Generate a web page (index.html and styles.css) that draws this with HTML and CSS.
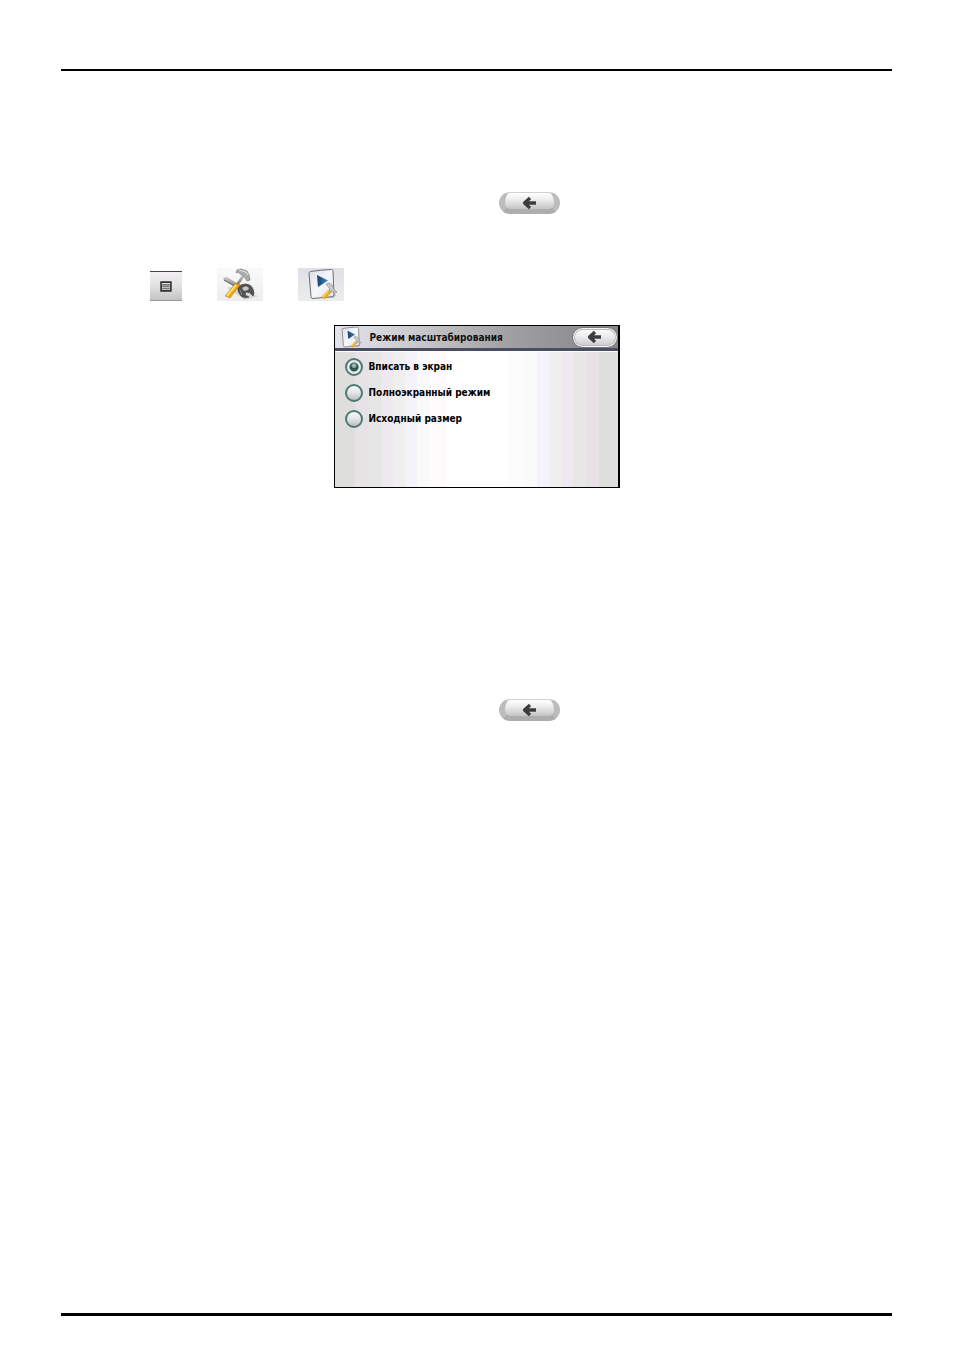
FILE: index.html
```
<!DOCTYPE html>
<html lang="ru">
<head>
	<meta charset="UTF-8" />
	<title>Режим масштабирования</title>
	<link rel="stylesheet" href="styles.css">
</head>
<body>
	<!-- shared drawings -->
	<svg class="defs" aria-hidden="true">
		<defs>
			<linearGradient id="paper" x1="0" y1="0" x2="1" y2="1">
				<stop offset="0" stop-color="#d9dde5" />
				<stop offset="0.5" stop-color="#f6f7fa" />
				<stop offset="1" stop-color="#e2e4ea" />
			</linearGradient>
			<linearGradient id="play" x1="0" y1="0" x2="1" y2="0">
				<stop offset="0" stop-color="#173f68" />
				<stop offset="1" stop-color="#3f86bd" />
			</linearGradient>
			<linearGradient id="steel" x1="0" y1="0" x2="0" y2="1">
				<stop offset="0" stop-color="#c9cbcb" />
				<stop offset="1" stop-color="#686b6c" />
			</linearGradient>
		</defs>
		<symbol id="arrow" viewBox="0 0 14 14">
			<path d="M7.500 2 2 7l5.500 5M2.500 7h11" fill="none" stroke="#3c3c3e" stroke-width="3.300" stroke-linejoin="round" />
		</symbol>
		<symbol id="sheet" viewBox="0 0 32 32">
			<path d="M4 30h24l2-3-3-2z" fill="#999" opacity="0.5" />
			<path d="M4.500 3.500Q14 2 25.500 1.500q1.500 0 1.500 2l1 23q0 2-2 2.200L7 30.500q-2 0-2-2L3 5.500q0-2 1.500-2z" fill="url(#paper)" stroke="#6b6e75" />
			<path d="m11 7 11 5.500L12 19z" fill="url(#play)" />
			<path d="m17 30 8-8" stroke="#e3a92e" stroke-width="4" />
			<path d="m16.500 29 8-8" stroke="#ffd65a" stroke-width="1.500" />
			<path d="m20 16 3-1 3 2 2 5 3 2-1 1-4-2-3 1 1-3z" fill="#c9cccb" stroke="#8b8f8d" stroke-width="0.700" />
		</symbol>
	</svg>

	<main class="page">
		<p class="line">
			<button type="button" class="back" aria-label="Назад"><svg><use href="#arrow" /></svg></button>
		</p>

		<div class="path">
			<button type="button" class="menu" aria-label="Меню">
				<svg viewBox="0 0 11 10"><path d="M1 1h9v8H1z" fill="#e4e4e4" stroke="#303030" stroke-width="1.500" /><path d="M2 3.500h7M2 5.200h7M2 7h7" stroke="#555" /></svg>
			</button>
			<button type="button" class="tile" aria-label="Настройки">
				<svg viewBox="0 0 46 33">
					<path d="M10 20q9-4 18 5l14 3-14 4z" fill="#c4c4c4" opacity="0.6" />
					<!-- wrench -->
					<path d="m6 10 4-1 16 10-2 4L7 12z" fill="url(#steel)" />
					<path d="m7 12 16 9" stroke="#5b5e5f" />
					<path d="M21 19q3-3 7-3 6 0 8 5 2 5 0 7l-3-3-4-1-1 3 4 2q-5 2-8-1-4-4-3-10z" fill="#505354" stroke="#3d4040" stroke-width="0.600" />
					<path d="m25 20 4-2 3 2-1 2-4 1z" fill="#c4c7c7" />
					<path d="m23 22 2 5" stroke="#8c8f90" />
					<!-- hammer -->
					<path d="m25 7 3 1-7 10-2-2z" fill="url(#steel)" />
					<path d="m20 2 4-1 6 2 2 4 1 5-3 1-3-5-4-2-2-2-2 1z" fill="#aaadae" stroke="#7c7f80" stroke-width="0.700" />
					<path d="m22 2 7 2 2 3" fill="none" stroke="#e8eaea" />
					<path d="m19 15 4 2-10 13-5-2z" fill="#f0a01e" stroke="#c77c19" stroke-width="0.600" />
					<path d="M19 17 10 28" stroke="#ffe056" stroke-width="2" />
				</svg>
			</button>
			<button type="button" class="tile" aria-label="Режим масштабирования"><svg viewBox="-8 0 46 33"><use href="#sheet" width="32" height="32" /></svg></button>
		</div>

		<section class="screen">
			<header class="bar">
				<svg class="logo"><use href="#sheet" /></svg>
				<h1>Режим масштабирования</h1>
				<button type="button" class="back small" aria-label="Назад"><svg><use href="#arrow" /></svg></button>
			</header>
			<form class="modes">
				<label><input type="radio" name="mode" checked />Вписать в экран</label>
				<label><input type="radio" name="mode" />Полноэкранный режим</label>
				<label><input type="radio" name="mode" />Исходный размер</label>
			</form>
		</section>

		<p class="line">
			<button type="button" class="back" aria-label="Назад"><svg><use href="#arrow" /></svg></button>
		</p>
	</main>
</body>
</html>
```

FILE: styles.css
```
	* { box-sizing: border-box; }
	body {
		margin: 0;
		padding: 69px 62px 35px 61px;
		min-height: 100vh;
		display: flex;
		background-color: #fff;
		font-family: "DejaVu Sans Condensed", "DejaVu Sans", sans-serif;
	}
	.defs {
		position: absolute;
		width: 0;
		height: 0;
	}
	.page {
		flex: 1;
		display: flex;
		flex-direction: column;
		border-top: 2px solid #000;
		border-bottom: 3px solid #000;
		padding-top: 121px;
	}
	button {
		display: flex;
		align-items: center;
		justify-content: center;
		padding: 0;
		border: 0;
	}
	.line {
		margin: 0;
		padding-left: 438px;
	}
	.back {
		width: 61px;
		height: 22px;
		border: 1px solid #bdbdbd;
		border-width: 1px 6px 5px;
		border-color: #d0d0d0 #bcbcbc #adadad;
		border-radius: 11px;
		background: linear-gradient(#fff, #eee 40%, #c4c4c4);
	}
	.back svg {
		width: 15px;
		height: 14px;
		margin-top: 4px;
	}
	.path {
		display: flex;
		align-items: flex-end;
		gap: 35px;
		margin-top: 54px;
		padding-left: 89px;
	}
	.menu {
		width: 32px;
		height: 30px;
		border-top: 1px solid #444;
		border-bottom: 1px solid #999;
		background: linear-gradient(#f2f0f2, #e2e0e2 50%, #c4c2c4);
	}
	.menu svg {
		width: 12px;
		height: 11px;
	}
	.tile {
		width: 46px;
		height: 33px;
		background: linear-gradient(#fafafa, #ededed);
	}
	.tile:last-child { background: linear-gradient(#dfe1e6, #ececec); }
	.tile svg {
		width: 46px;
		height: 33px;
	}
	.screen {
		align-self: center;
		width: 286px;
		height: 163px;
		margin: 24px 0 211px;
		border: 1px solid #000;
		border-right-width: 2px;
		/* banded background of the device display */
		background: linear-gradient(90deg,
			#dededc 20px, #e6e2e6 20px 34px, #e6e7e4 34px 46px, #eee8ef 46px 58px,
			#efefef 58px 70px, #f6f2fa 70px 82px, #f8fbfa 82px 95px, #fefbfd 95px 112px,
			#fff 112px 173px, #fefbfd 173px 189px, #f8fbfa 189px 202px, #f6f2fa 202px 214px,
			#efefef 214px 226px, #efe8f0 226px 238px, #e7e8e5 238px 250px, #e6e2e6 250px 264px,
			#dededc 264px);
	}
	.bar {
		display: flex;
		align-items: center;
		height: 25px;
		border-bottom: 3px solid #4a4e62;
		background: linear-gradient(90deg, #e3e4ea, #c8c8cc 30%, #a0a0a2 62%, #858588);
		box-shadow: 0 1px #fff;
	}
	.logo {
		width: 22px;
		height: 22px;
		margin-left: 5px;
	}
	h1 {
		flex: 1;
		margin: 0 0 0 8px;
		padding-top: 2px;
		font-size: 10px;
		line-height: 20px;
		font-weight: bold;
		color: #111;
	}
	.small {
		width: 46px;
		height: 21px;
		border: 1px solid #777;
		background: linear-gradient(#fff, #e9e9eb 50%, #c7c7ca);
		box-shadow: inset 0 0 0 1px #f4f4f4, inset 0 0 0 2px #bbb;
	}
	.small svg { margin-top: 0; }
	.modes {
		display: flex;
		flex-direction: column;
		gap: 6px;
		padding: 6px 10px;
	}
	.modes label {
		display: flex;
		align-items: center;
		gap: 6px;
		font-size: 10px;
		line-height: 20px;
		font-weight: bold;
		color: #000;
	}
	.modes input {
		appearance: none;
		width: 18px;
		height: 18px;
		margin: 0;
		border: 2px solid #4d7a72;
		border-radius: 9px;
		background: linear-gradient(#fafafa, #e4e4e4 50%, #bcbcbc);
	}
	.modes input:checked {
		background: radial-gradient(circle at 50% 40%, #b9d0ca 0, #7d9f98 2px, transparent 3px), radial-gradient(circle, #2f554d 4px, transparent 5px), #e6ebe9;
	}
```
